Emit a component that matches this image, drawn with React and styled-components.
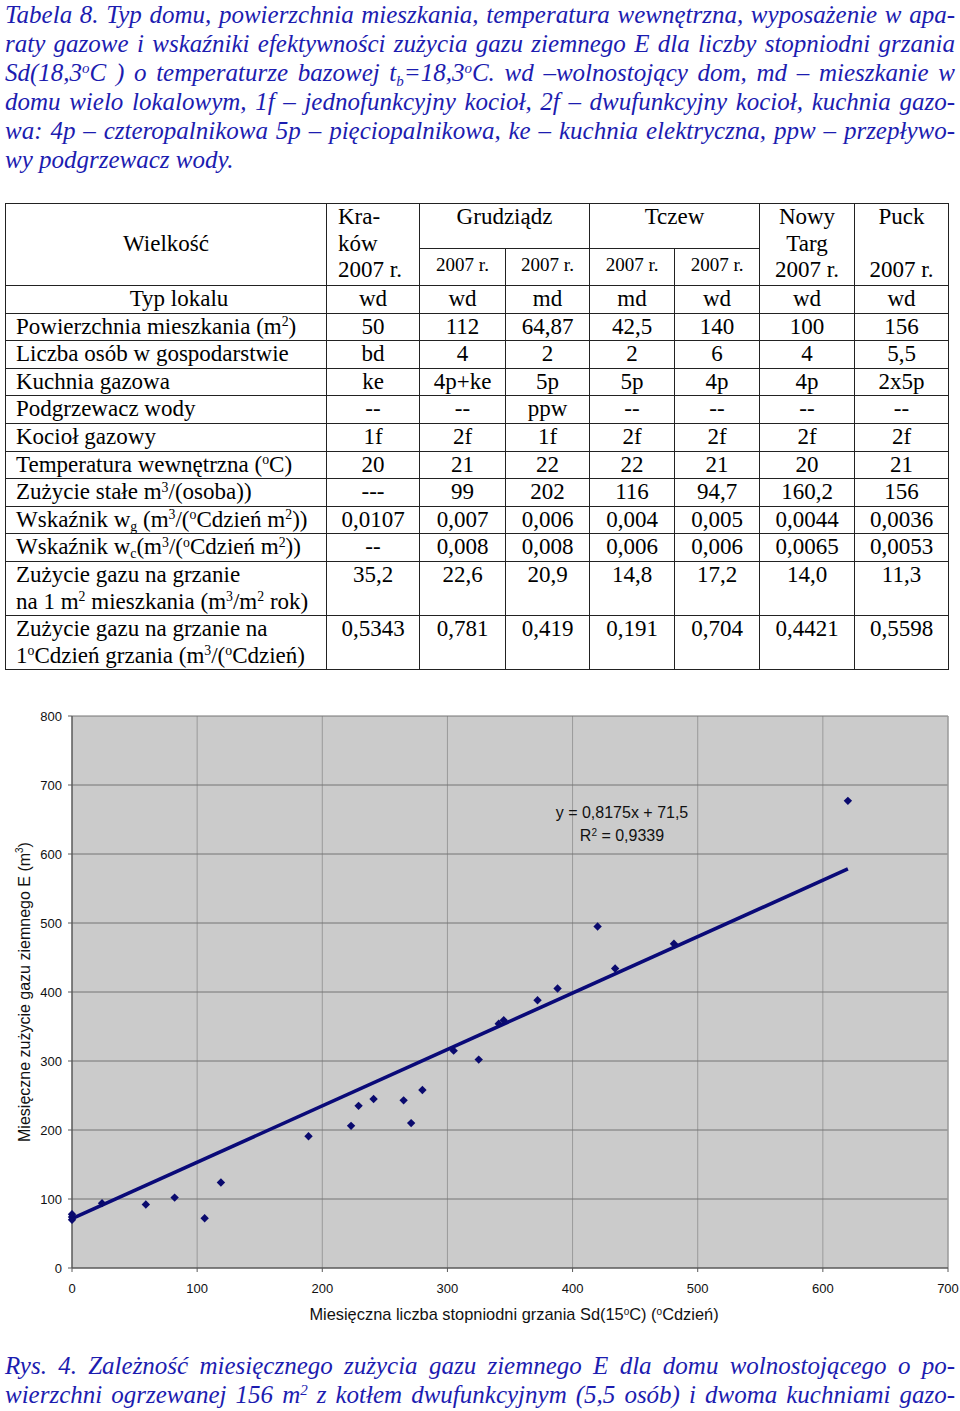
import React from "react";
import styled, { createGlobalStyle } from "styled-components";

const GlobalStyle = createGlobalStyle`
  html, body {
    margin: 0;
    padding: 0;
    background: #fff;
  }
  body {
    font-family: "Liberation Serif", "Times New Roman", serif;
    color: #000;
  }
  sup, sub {
    font-size: 0.6em;
    line-height: 0;
    position: relative;
    vertical-align: baseline;
  }
  sup { top: -0.55em; }
  sub { top: 0.3em; }
`;

const Page = styled.div`
  width: 960px;
`;

const Caption = styled.div`
  padding: 0 5px;
  font-style: italic;
  font-size: 25px;
  line-height: 29px;
  color: #1c1cb0;
  margin-top: ${(p) => p.$top || 0}px;
`;

const Line = styled.div`
  text-align: justify;
  text-align-last: ${(p) => (p.$last ? "left" : "justify")};
  white-space: nowrap;
`;

const Table = styled.table`
  margin: 29px 0 0 5px;
  width: 943px;
  border-collapse: collapse;
  table-layout: fixed;
  font-size: 23px;
  line-height: 26.6px;
`;

const HeadRow = styled.tr`
  height: ${(p) => p.$h}px;
`;

const HeadCell = styled.td`
  border: 1px solid #222;
  padding: ${(p) => (p.$left ? "0 0 0 11px" : "0")};
  text-align: ${(p) => (p.$left ? "left" : "center")};
  vertical-align: ${(p) => p.$valign || "top"};
`;

const YearCell = styled.td`
  border: 1px solid #222;
  padding: 3px 0 0;
  text-align: center;
  vertical-align: top;
  font-size: 19px;
`;

const LabelCell = styled.td`
  border: 1px solid #222;
  padding: ${(p) => (p.$center ? "0 0 0 26px" : "0 0 0 10px")};
  text-align: ${(p) => (p.$center ? "center" : "left")};
  vertical-align: top;
  white-space: nowrap;
`;

const ValueCell = styled.td`
  border: 1px solid #222;
  padding: 0;
  text-align: center;
  vertical-align: top;
`;

const ChartSvg = styled.svg`
  display: block;
  margin-top: 21px;
  font-family: "Liberation Sans", Arial, sans-serif;
`;

const colWidths = [321, 93, 86, 84, 85, 85, 95, 94];

const rows = [
  { label: "Typ lokalu", center: true, v: ["wd", "wd", "md", "md", "wd", "wd", "wd"] },
  { label: <>Powierzchnia mieszkania (m<sup>2</sup>)</>, v: ["50", "112", "64,87", "42,5", "140", "100", "156"] },
  { label: "Liczba osób w gospodarstwie", v: ["bd", "4", "2", "2", "6", "4", "5,5"] },
  { label: "Kuchnia gazowa", v: ["ke", "4p+ke", "5p", "5p", "4p", "4p", "2x5p"] },
  { label: "Podgrzewacz wody", v: ["--", "--", "ppw", "--", "--", "--", "--"] },
  { label: "Kocioł gazowy", v: ["1f", "2f", "1f", "2f", "2f", "2f", "2f"] },
  { label: <>Temperatura wewnętrzna (<sup>o</sup>C)</>, v: ["20", "21", "22", "22", "21", "20", "21"] },
  { label: <>Zużycie stałe m<sup>3</sup>/(osoba))</>, v: ["---", "99", "202", "116", "94,7", "160,2", "156"] },
  {
    label: <>Wskaźnik w<sub>g</sub> (m<sup>3</sup>/(<sup>o</sup>Cdzień m<sup>2</sup>))</>,
    v: ["0,0107", "0,007", "0,006", "0,004", "0,005", "0,0044", "0,0036"],
  },
  {
    label: <>Wskaźnik w<sub>c</sub>(m<sup>3</sup>/(<sup>o</sup>Cdzień m<sup>2</sup>))</>,
    v: ["--", "0,008", "0,008", "0,006", "0,006", "0,0065", "0,0053"],
  },
  {
    label: <>Zużycie gazu na grzanie<br />na 1 m<sup>2</sup> mieszkania (m<sup>3</sup>/m<sup>2</sup> rok)</>,
    v: ["35,2", "22,6", "20,9", "14,8", "17,2", "14,0", "11,3"],
  },
  {
    label: <>Zużycie gazu na grzanie na<br />1<sup>o</sup>Cdzień grzania (m<sup>3</sup>/(<sup>o</sup>Cdzień)</>,
    v: ["0,5343", "0,781", "0,419", "0,191", "0,704", "0,4421", "0,5598"],
  },
];

// chart geometry in page pixels (svg viewBox starts at page y = 690)
const X0 = 72;
const X1 = 948;
const Y0 = 1267;
const Y1 = 715;
const sx = (v) => X0 + (v / 700) * (X1 - X0);
const sy = (v) => Y0 - (v / 800) * (Y0 - Y1);

const points = [
  [0, 70], [0, 74], [0, 78], [24, 94], [59, 92], [82, 102], [106, 72], [119, 124],
  [189, 191], [223, 206], [229, 235], [241, 245], [265, 243], [271, 210], [280, 258],
  [305, 315], [325, 302], [341, 354], [345, 359], [372, 388], [388, 405], [420, 495],
  [434, 434], [481, 470], [620, 677],
];

const Diamond = ({ x, y }) => {
  const cx = sx(x);
  const cy = sy(y);
  const r = 4.2;
  return <polygon points={`${cx},${cy - r} ${cx + r},${cy} ${cx},${cy + r} ${cx - r},${cy}`} fill="#0a0a6e" />;
};

const Chart = () => {
  const xs = [0, 100, 200, 300, 400, 500, 600, 700];
  const ys = [0, 100, 200, 300, 400, 500, 600, 700, 800];
  return (
    <ChartSvg width="960" height="660" viewBox="0 690 960 660">
      <rect x={X0} y={Y1} width={X1 - X0} height={Y0 - Y1} fill="#cbcbcb" />
      {xs.slice(1, -1).map((v) => (
        <line key={`vx${v}`} x1={sx(v)} x2={sx(v)} y1={Y1} y2={Y0} stroke="#9a9a9a" strokeWidth="1" />
      ))}
      {ys.slice(1).map((v) => (
        <line key={`hy${v}`} x1={X0} x2={X1} y1={sy(v)} y2={sy(v)} stroke="#747474" strokeWidth="1" />
      ))}
      <line x1={X1} x2={X1} y1={Y1} y2={Y0} stroke="#9a9a9a" strokeWidth="1.5" />
      <line x1={X0} x2={X0} y1={Y1} y2={Y0} stroke="#5a5a5a" strokeWidth="1.5" />
      <line x1={X0} x2={X1} y1={Y0} y2={Y0} stroke="#5a5a5a" strokeWidth="1.5" />
      {ys.map((v) => (
        <g key={`ty${v}`}>
          <line x1={X0 - 4} x2={X0} y1={sy(v)} y2={sy(v)} stroke="#5a5a5a" strokeWidth="1" />
          <text x={62} y={sy(v) + 4.5} fontSize="13" textAnchor="end" fill="#111">{v}</text>
        </g>
      ))}
      {xs.map((v) => (
        <g key={`tx${v}`}>
          <line x1={sx(v)} x2={sx(v)} y1={Y0} y2={Y0 + 4} stroke="#5a5a5a" strokeWidth="1" />
          <text x={sx(v)} y={1292} fontSize="13" textAnchor="middle" fill="#111">{v}</text>
        </g>
      ))}
      <line
        x1={sx(0)}
        y1={sy(71.5)}
        x2={sx(620)}
        y2={sy(0.8175 * 620 + 71.5)}
        stroke="#0a0a78"
        strokeWidth="3.6"
      />
      {points.map(([x, y], i) => (
        <Diamond key={i} x={x} y={y} />
      ))}
      <text x={622} y={817} fontSize="16" textAnchor="middle" fill="#111">y = 0,8175x + 71,5</text>
      <text x={622} y={840} fontSize="16" textAnchor="middle" fill="#111">
        R<tspan baselineShift="super" fontSize="10">2</tspan> = 0,9339
      </text>
      <text
        x={26}
        y={991}
        fontSize="16"
        textAnchor="middle"
        dominantBaseline="middle"
        transform="rotate(-90 26 991)"
        fill="#111"
      >
        Miesięczne zużycie gazu ziemnego E (m<tspan baselineShift="super" fontSize="10">3</tspan>)
      </text>
      <text x={514} y={1319} fontSize="16.4" textAnchor="middle" fill="#111">
        Miesięczna liczba stopniodni grzania Sd(15<tspan baselineShift="super" fontSize="10">o</tspan>C) (
        <tspan baselineShift="super" fontSize="10">o</tspan>Cdzień)
      </text>
    </ChartSvg>
  );
};

const App = () => (
  <Page>
    <GlobalStyle />
    <Caption>
      <Line>Tabela 8. Typ domu, powierzchnia mieszkania, temperatura wewnętrzna, wyposażenie w apa-</Line>
      <Line>raty gazowe i wskaźniki efektywności zużycia gazu ziemnego E dla liczby stopniodni grzania</Line>
      <Line>
        Sd(18,3<sup>o</sup>C ) o temperaturze bazowej t<sub>b</sub>=18,3<sup>o</sup>C. wd –wolnostojący dom, md – mieszkanie w
      </Line>
      <Line>domu wielo lokalowym, 1f – jednofunkcyjny kocioł, 2f – dwufunkcyjny kocioł, kuchnia gazo-</Line>
      <Line>wa: 4p – czteropalnikowa 5p – pięciopalnikowa, ke – kuchnia elektryczna, ppw – przepływo-</Line>
      <Line $last>wy podgrzewacz wody.</Line>
    </Caption>

    <Table>
      <colgroup>
        {colWidths.map((w, i) => (
          <col key={i} style={{ width: w }} />
        ))}
      </colgroup>
      <tbody>
        <HeadRow $h={45}>
          <HeadCell rowSpan={2} $valign="middle">Wielkość</HeadCell>
          <HeadCell rowSpan={2} $left>Kra-<br />ków<br />2007 r.</HeadCell>
          <HeadCell colSpan={2}>Grudziądz</HeadCell>
          <HeadCell colSpan={2}>Tczew</HeadCell>
          <HeadCell rowSpan={2}>Nowy<br />Targ<br />2007 r.</HeadCell>
          <HeadCell rowSpan={2}>Puck<br /><br />2007 r.</HeadCell>
        </HeadRow>
        <HeadRow $h={37}>
          <YearCell>2007 r.</YearCell>
          <YearCell>2007 r.</YearCell>
          <YearCell>2007 r.</YearCell>
          <YearCell>2007 r.</YearCell>
        </HeadRow>
        {rows.map((r, i) => (
          <tr key={i}>
            <LabelCell $center={r.center}>{r.label}</LabelCell>
            {r.v.map((v, j) => (
              <ValueCell key={j}>{v}</ValueCell>
            ))}
          </tr>
        ))}
      </tbody>
    </Table>

    <Chart />

    <Caption>
      <Line>Rys. 4. Zależność miesięcznego zużycia gazu ziemnego E dla domu wolnostojącego o po-</Line>
      <Line>
        wierzchni ogrzewanej 156 m<sup>2</sup> z kotłem dwufunkcyjnym (5,5 osób) i dwoma kuchniami gazo-
      </Line>
    </Caption>
  </Page>
);

export default App;
